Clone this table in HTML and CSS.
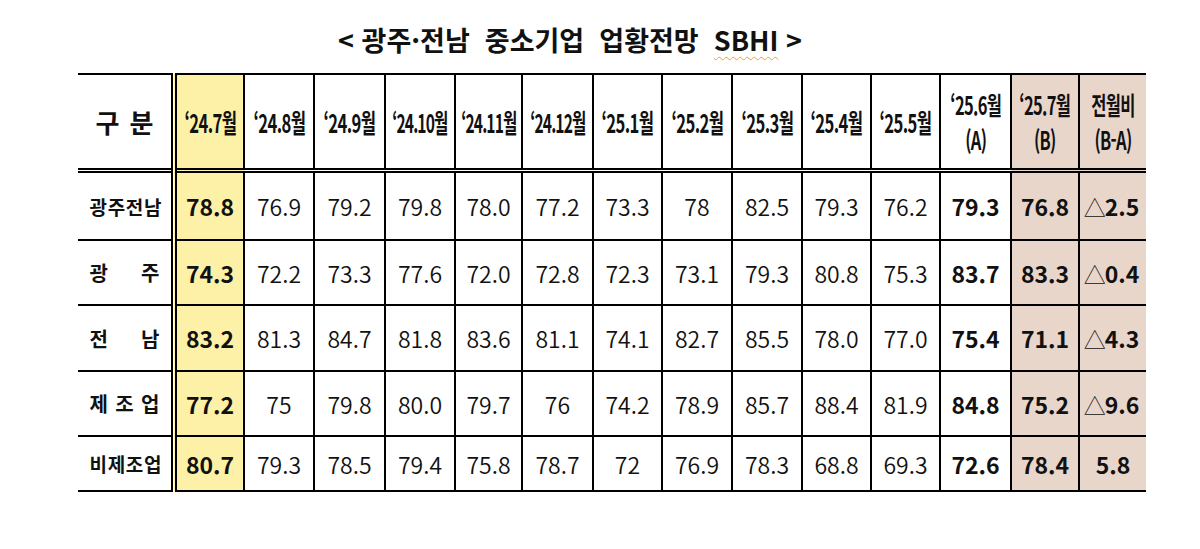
FILE: index.html
```html
<!DOCTYPE html>
<html lang="ko">
<head>
<meta charset="utf-8">
<title>광주·전남 중소기업 업황전망 SBHI</title>
<link rel="stylesheet" href="styles.css">
</head>
<body>
<div class="page">
  <h1 class="title">&lt; 광주·전남 &nbsp;중소기업 &nbsp;업황전망 &nbsp;<span class="spell">SBHI</span> &gt;</h1>
  <table class="sbhi">
    <colgroup>
      <col class="c-label">
      <col class="c70"><col class="c70"><col class="c71"><col class="c70"><col class="c67">
      <col class="c71"><col class="c69"><col class="c70"><col class="c70"><col class="c69">
      <col class="c69"><col class="c71"><col class="c68"><col class="c67">
    </colgroup>
    <thead>
      <tr>
        <th class="label"><span class="spread big"><span>구</span><span>분</span></span></th>
        <th class="yellow"><span class="cond">‘24.7월</span></th>
        <th><span class="cond">‘24.8월</span></th>
        <th><span class="cond">‘24.9월</span></th>
        <th><span class="cond narrow">‘24.10월</span></th>
        <th><span class="cond narrow">‘24.11월</span></th>
        <th><span class="cond narrow">‘24.12월</span></th>
        <th><span class="cond">‘25.1월</span></th>
        <th><span class="cond">‘25.2월</span></th>
        <th><span class="cond">‘25.3월</span></th>
        <th><span class="cond">‘25.4월</span></th>
        <th><span class="cond">‘25.5월</span></th>
        <th><span class="cond two">‘25.6월<br>(A)</span></th>
        <th class="pink"><span class="cond two">‘25.7월<br>(B)</span></th>
        <th class="pink last"><span class="cond two">전월비<br>(B-A)</span></th>
      </tr>
    </thead>
    <tbody>
      <tr class="r1">
        <th class="label"><span class="spread tight"><span>광</span><span>주</span><span>전</span><span>남</span></span></th>
        <td class="yellow b">78.8</td>
        <td>76.9</td><td>79.2</td><td>79.8</td><td>78.0</td><td>77.2</td><td>73.3</td><td>78</td><td>82.5</td><td>79.3</td><td>76.2</td>
        <td class="b">79.3</td>
        <td class="pink b">76.8</td>
        <td class="pink last b"><span class="tri">△</span>2.5</td>
      </tr>
      <tr class="r2">
        <th class="label"><span class="spread"><span>광</span><span>주</span></span></th>
        <td class="yellow b">74.3</td>
        <td>72.2</td><td>73.3</td><td>77.6</td><td>72.0</td><td>72.8</td><td>72.3</td><td>73.1</td><td>79.3</td><td>80.8</td><td>75.3</td>
        <td class="b">83.7</td>
        <td class="pink b">83.3</td>
        <td class="pink last b"><span class="tri">△</span>0.4</td>
      </tr>
      <tr class="r3">
        <th class="label"><span class="spread"><span>전</span><span>남</span></span></th>
        <td class="yellow b">83.2</td>
        <td>81.3</td><td>84.7</td><td>81.8</td><td>83.6</td><td>81.1</td><td>74.1</td><td>82.7</td><td>85.5</td><td>78.0</td><td>77.0</td>
        <td class="b">75.4</td>
        <td class="pink b">71.1</td>
        <td class="pink last b"><span class="tri">△</span>4.3</td>
      </tr>
      <tr class="r4">
        <th class="label"><span class="spread"><span>제</span><span>조</span><span>업</span></span></th>
        <td class="yellow b">77.2</td>
        <td>75</td><td>79.8</td><td>80.0</td><td>79.7</td><td>76</td><td>74.2</td><td>78.9</td><td>85.7</td><td>88.4</td><td>81.9</td>
        <td class="b">84.8</td>
        <td class="pink b">75.2</td>
        <td class="pink last b"><span class="tri">△</span>9.6</td>
      </tr>
      <tr class="r5">
        <th class="label"><span class="spread tight"><span>비</span><span>제</span><span>조</span><span>업</span></span></th>
        <td class="yellow b">80.7</td>
        <td>79.3</td><td>78.5</td><td>79.4</td><td>75.8</td><td>78.7</td><td>72</td><td>76.9</td><td>78.3</td><td>68.8</td><td>69.3</td>
        <td class="b">72.6</td>
        <td class="pink b">78.4</td>
        <td class="pink last b">5.8</td>
      </tr>
    </tbody>
  </table>
</div>
</body>
</html>
```

FILE: styles.css
```css
html, body {
  margin: 0;
  padding: 0;
  background: #ffffff;
}

body {
  font-family: "Noto Sans CJK KR", "Noto Sans", sans-serif;
  color: #111111;
}

.page {
  width: 1200px;
  height: 549px;
  padding-top: 20px;
  box-sizing: border-box;
}

.title {
  margin: 0;
  padding-right: 60px;
  text-align: center;
  font-size: 27px;
  line-height: 40px;
  font-weight: 700;
  letter-spacing: 0;
}

.spell {
  text-decoration: underline wavy #e8a040;
  text-decoration-thickness: 1px;
  text-underline-offset: 5px;
}

.sbhi {
  margin-top: 13px;
  margin-left: 78px;
  width: 1068px;
  table-layout: fixed;
  border-collapse: collapse;
  border-top: 2px solid #000;
  border-bottom: 2px solid #000;
}

.c-label { width: 96px; }
.c67 { width: 67px; }
.c68 { width: 68px; }
.c69 { width: 69px; }
.c70 { width: 70px; }
.c71 { width: 71px; }

.sbhi th,
.sbhi td {
  padding: 0;
  text-align: center;
  vertical-align: middle;
  border-left: 2px solid #000;
  border-bottom: 2px solid #000;
  white-space: nowrap;
}

.sbhi th.label {
  border-left: none;
  border-right: 6px double #000;
}

.sbhi thead th {
  border-bottom: 5px double #000;
  height: 93px;
  font-weight: 700;
  font-size: 26px;
  line-height: 30px;
}

.sbhi tbody tr:last-child th,
.sbhi tbody tr:last-child td {
  border-bottom: none;
}

.r1 > * { height: 66px; }
.r2 > * { height: 63px; }
.r3 > * { height: 64px; }
.r4 > * { height: 63px; }
.r5 > * { height: 53px; }

.sbhi td {
  font-size: 23px;
  font-weight: 350;
  letter-spacing: 0;
}

.sbhi td.b {
  font-weight: 700;
}

.tri {
  font-weight: 300;
  font-size: 22px;
  margin-right: -1px;
  margin-left: -3px;
}

.yellow { background: #fdf1a8; }
.pink { background: #e9d6cb; }

.cond {
  display: inline-block;
  transform: scaleX(0.64);
  letter-spacing: -1px;
  margin: 0 -14px;
}

.cond.narrow {
  transform: scaleX(0.6);
  letter-spacing: -1.5px;
}

.cond.two {
  transform: scaleX(0.66);
  line-height: 35px;
  font-size: 25px;
}

.spread {
  display: flex;
  justify-content: space-between;
  width: 70px;
  margin: 0 auto;
  font-size: 20px;
  font-weight: 700;
}

.spread.big {
  width: 58px;
  font-size: 26px;
}

.spread.tight {
  letter-spacing: -2px;
  font-size: 19px;
}
```
